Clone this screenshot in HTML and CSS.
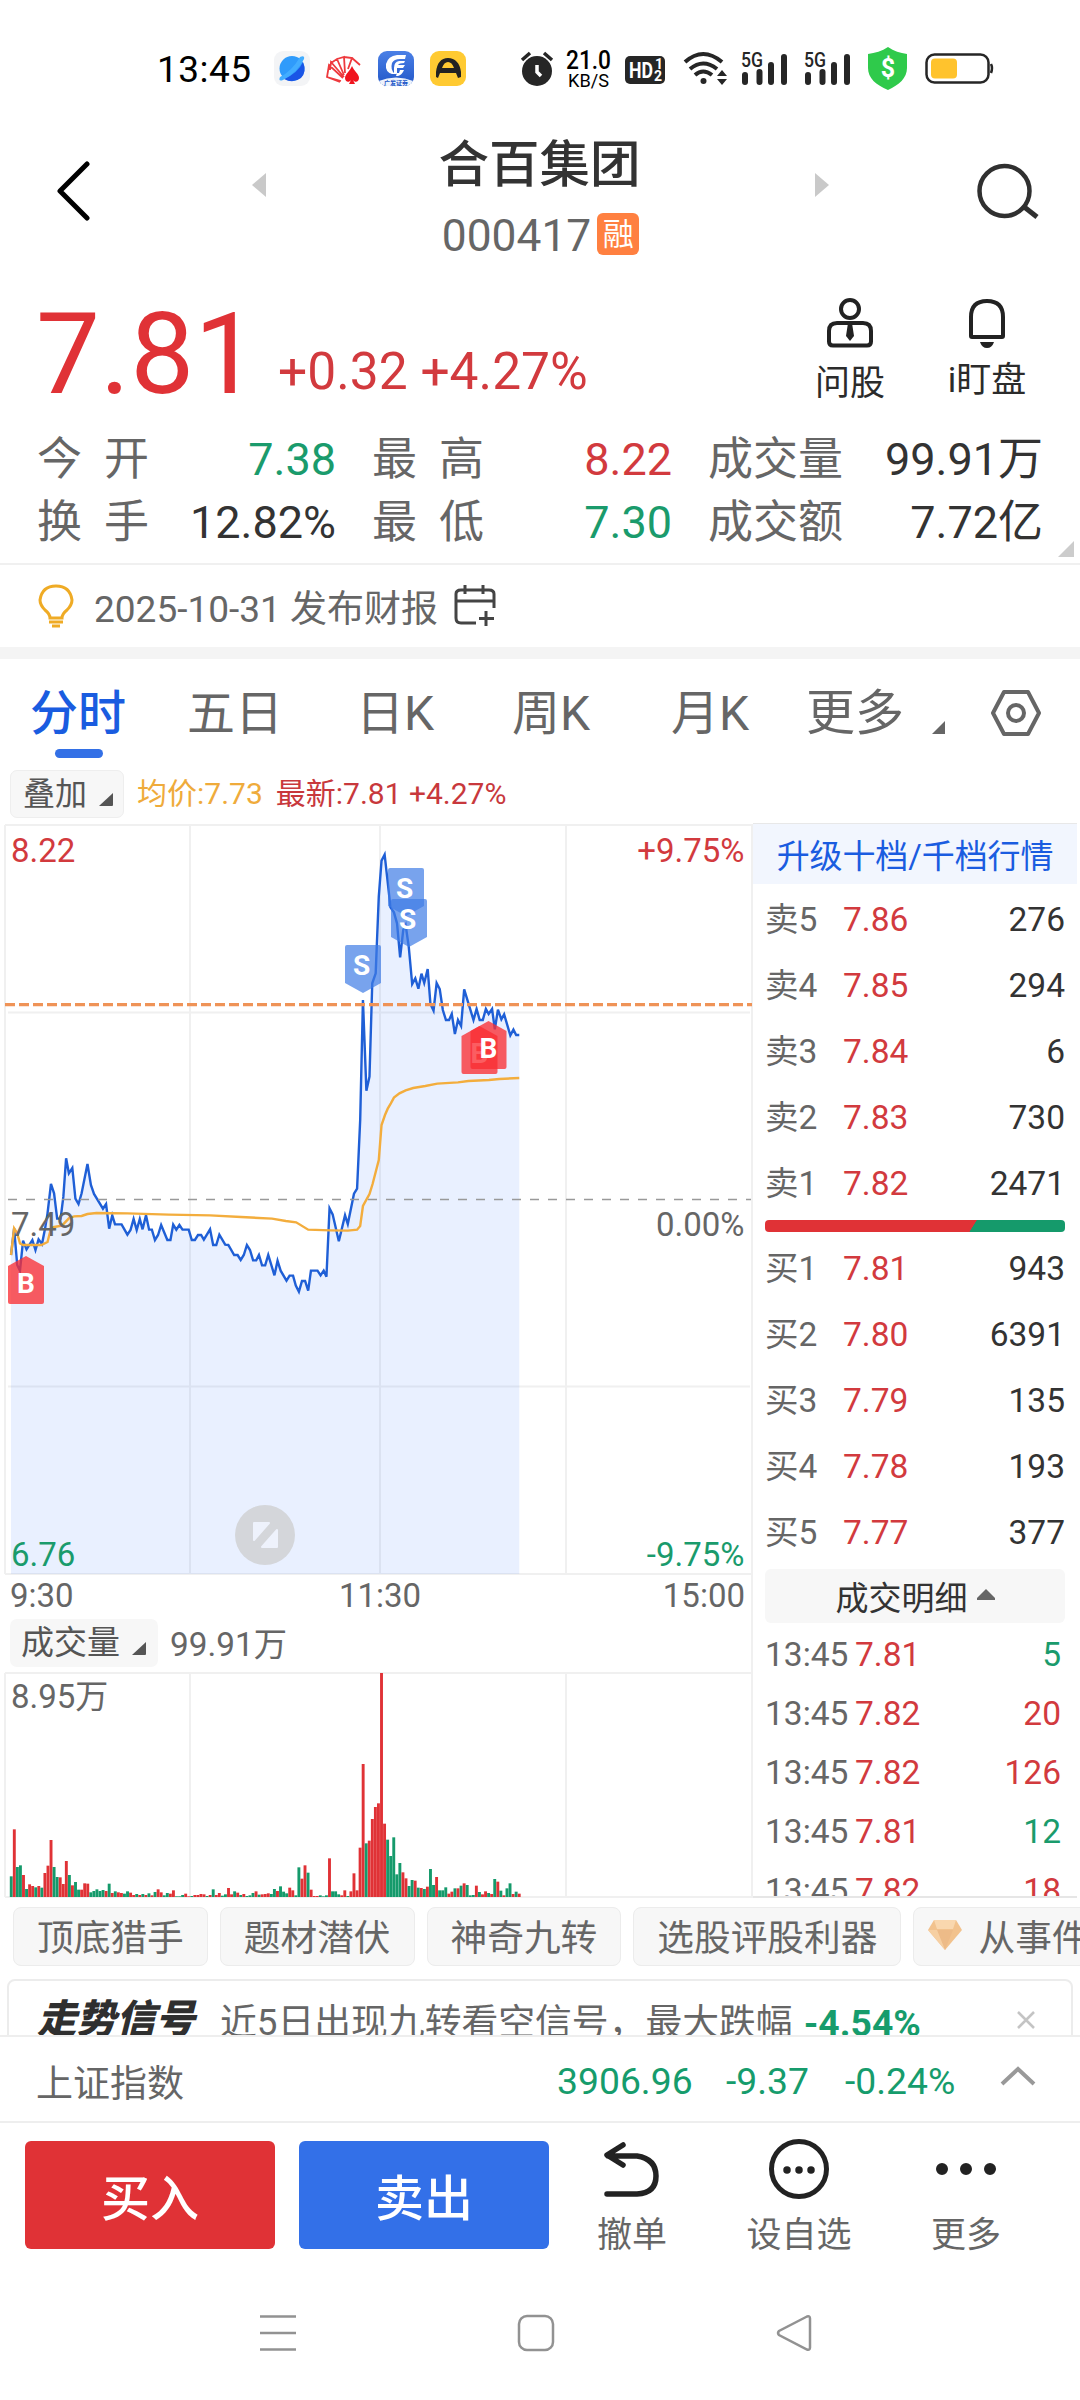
FILE: index.html
```html
<!DOCTYPE html>
<html lang="zh-CN">
<head>
<meta charset="utf-8">
<title>合百集团 000417</title>
<link rel="stylesheet" href="styles.css">
</head>
<body>
<header class="status">
  <span class="clock">13:45</span>
  <svg class="status-icons" width="730" height="66" viewBox="270 36 730 66">
    <defs>
      <linearGradient id="planet" x1="0" y1="0" x2="1" y2="1"><stop offset="0" stop-color="#35b5ff"/><stop offset=".55" stop-color="#3d9dff"/><stop offset="1" stop-color="#1247e0"/></linearGradient>
      <linearGradient id="gf" x1="0" y1="0" x2="0" y2="1"><stop offset="0" stop-color="#4b80e6"/><stop offset="1" stop-color="#2257c8"/></linearGradient>
      <clipPath id="gfClip"><rect x="378" y="51" width="36" height="35" rx="9"/></clipPath>
    </defs>
    <rect x="274" y="51" width="36" height="35" rx="9" fill="#f3f4f6"/>
    <circle cx="292" cy="68.500" r="12.500" fill="#2f9bfb"/>
    <path d="M303 62q4 10-2 16-8 6-17 1 14-6 19-17z" fill="#1a55e6"/>
    <path d="M300 57q5-2 4 2-6 13-21 21-5 2-3-3 12-6 20-20z" fill="#42adff"/>
    <g fill="none" stroke="#ee3a3e" stroke-width="1.800"><path d="M340 82l-13-5 2-12 14 13M330 70l1-8 13 15M331 63l6-4 7 16M337 59l7-2 1 16M344 57l8 1-4 11M352 58l8 7M327 77l14 4"/></g>
    <path d="M352 66c2 5 7 8 7 12 0 4-4 5-6 2l2 4h-6l2-4c-2 3-6 2-6-2 0-4 5-7 7-12z" fill="#f0141e"/>
    <g clip-path="url(#gfClip)"><rect x="378" y="51" width="36" height="35" fill="url(#gf)"/><path d="M376 82q20-9 40 0v6h-40z" fill="#eef3fc"/></g>
    <path d="M406 55h-9q-9 1-11 9-1 8 6 10h3q-5-4-3-11 2-4 8-4h5zM405 61h-6q-5 1-5 7v6h3v-6h6l2-3h-7q1-2 6-2zM400 70h4q-2 5-6 6h-2l1-3h2z" fill="#fff"/>
    <text x="396" y="84.500" font-size="6" font-weight="700" text-anchor="middle" fill="#2257c8">广发证券</text>
    <rect x="430" y="51" width="36" height="35" rx="9" fill="#ffca32"/>
    <path d="M438 78l-2-1v-5c1-9 5-14 12-14s12 5 13 14v5l-3 1-2-5h-16zM442 68h12q-2-6-6-6t-6 6z" fill="#222" fill-rule="evenodd"/>
    <circle cx="537" cy="71" r="15" fill="#262626"/><path d="M522 60l8-7M544 53l8 7" stroke="#262626" stroke-width="3.500"/><path d="M537 65v7l4 4" stroke="#fff" stroke-width="3.500" fill="none"/>
    <text x="588.500" y="69" font-size="25" font-weight="500" text-anchor="middle" textLength="45" lengthAdjust="spacingAndGlyphs">21.0</text>
    <text x="588.500" y="86.500" font-size="19" font-weight="400" text-anchor="middle" textLength="41" lengthAdjust="spacingAndGlyphs">KB/S</text>
    <rect x="625" y="56" width="40" height="28" rx="5" fill="#262626"/>
    <text x="629" y="78" font-size="22" font-weight="700" fill="#fff" textLength="24" lengthAdjust="spacingAndGlyphs">HD</text>
    <text x="655" y="69" font-size="14" font-weight="700" fill="#fff">1</text><text x="654" y="81" font-size="14" font-weight="700" fill="#fff">2</text>
    <g fill="none" stroke="#262626" stroke-width="4"><path d="M685 62q18-16 37 0M690 69q13-11 27 0M695 75q8-7 17 0"/></g><circle cx="703.500" cy="81" r="3" fill="#262626"/><path d="M717 76l5-6 5 6zM717 79h10l-5 6z" fill="#262626"/>
    <g id="signal5g"><text x="741" y="67" font-size="20" font-weight="500" textLength="22" lengthAdjust="spacingAndGlyphs" fill="#262626">5G</text><path d="M745 75v7M759.500 72v10M771 65v17M784 57v25" stroke="#262626" stroke-width="6" stroke-linecap="round"/></g>
    <use href="#signal5g" x="63"/>
    <path d="M888 47c6 4 12 6 19 7v14c0 10-8 17-19 22-12-5-20-12-20-22V54c7-1 14-3 20-7z" fill="#2fca4b"/>
    <text x="888" y="77" font-size="25" font-weight="700" fill="#fff" text-anchor="middle">$</text>
    <rect x="926.500" y="54.500" width="62" height="28" rx="8" fill="#fff" stroke="#262626" stroke-width="2.500"/><rect x="931" y="58.500" width="26" height="20" rx="4" fill="#ffc32d"/><path d="M991 64q2 4 0 9" stroke="#262626" stroke-width="2.500"/>
  </svg>
</header>

<section class="title-bar">
  <svg class="back" width="34" height="60" viewBox="0 0 34 60"><path d="M31 3L4 30l27 27" fill="none" stroke="#000" stroke-width="5" stroke-linecap="round" stroke-linejoin="round"/></svg>
  <svg class="prev" width="14" height="24" viewBox="0 0 14 24"><path d="M14 0v24L0 12z" fill="#c9c9c9"/></svg>
  <div class="title"><h1>合百集团</h1><p class="code">000417<b class="badge">融</b></p></div>
  <svg class="next" width="14" height="24" viewBox="0 0 14 24"><path d="M0 0v24l14-12z" fill="#c9c9c9"/></svg>
  <svg class="search" width="62" height="58" viewBox="0 0 62 58"><circle cx="27.500" cy="29" r="25" fill="none" stroke="#303030" stroke-width="4.500"/><path d="M46 44l14 11" stroke="#303030" stroke-width="5"/></svg>
</section>

<section class="quote">
  <span class="price">7.81</span>
  <span class="change">+0.32 +4.27%</span>
  <div class="tool ask"><svg width="50" height="52" viewBox="0 0 50 52" fill="none" stroke="#222" stroke-width="4"><circle cx="25" cy="12" r="9"/><path d="M8 48.500q-4 0-4-4V34q0-8 8-8h26q8 0 8 8v10.500q0 4-4 4z"/><path d="M23 26h4l2 13-4 5-4-5z" fill="#222" stroke="none"/></svg><span>问股</span></div>
  <div class="tool watch"><svg width="40" height="52" viewBox="0 0 40 52" fill="none" stroke="#222" stroke-width="4"><path d="M4 39V20Q4 4 20 4t16 16v19q0 1-1 1H5q-1 0-1-1z"/><path d="M13 45h14q-2 6-7 6t-7-6z" fill="#222" stroke="none"/></svg><span>i盯盘</span></div>
</section>

<section class="stats">
  <span class="k wide">今开</span><span class="v green">7.38</span><span class="k wide inner">最高</span><span class="v red">8.22</span><span class="k inner">成交量</span><span class="v">99.91万</span>
  <span class="k wide">换手</span><span class="v">12.82%</span><span class="k wide inner">最低</span><span class="v green">7.30</span><span class="k inner">成交额</span><span class="v">7.72亿</span>
  <i class="corner"></i>
</section>

<section class="tip">
  <svg width="36" height="44" viewBox="0 0 36 44" fill="none" stroke="#efab25" stroke-width="3"><path d="M12 34q0-4-5-8-5-5-5-10Q4 2 18 2t16 14q0 5-5 10-5 4-5 8zM11 38h14M14 42h8"/></svg>
  <span>2025-10-31 发布财报</span>
  <svg width="42" height="42" viewBox="0 0 42 42" fill="none" stroke="#444" stroke-width="3"><path d="M22 38H7q-5 0-5-5V9q0-4 5-4h28q5 0 5 4v14M2 16h38M11 0v9M29 0v9M32 26v15M25 33.500h15"/></svg>
</section>

<nav class="tabs">
  <span class="tab active">分时</span><span class="tab">五日</span><span class="tab">日K</span><span class="tab">周K</span><span class="tab">月K</span><span class="tab more">更多</span>
  <svg class="tri" width="13" height="13" viewBox="0 0 14 14"><path d="M14 0v14H0z" fill="#666"/></svg>
  <svg class="gear" width="52" height="48" viewBox="0 0 52 48" fill="none" stroke="#666" stroke-width="4"><path d="M14 3h24l11 21-11 21H14L3 24z" stroke-linejoin="round"/><circle cx="26" cy="24" r="8"/></svg>
</nav>

<main class="market">
  <section class="charts">
    <div class="legend"><span class="chip">叠加<svg width="14" height="13" viewBox="0 0 14 13"><path d="M14 0v12q0 1-1 1H0z" fill="#555"/></svg></span><span class="avg">均价:7.73</span><span class="last">最新:7.81 +4.27%</span></div>
    <svg class="chart" width="753" height="793" viewBox="0 823 753 793">
      <g fill="none" stroke="#f0f0f0" stroke-width="2"><path d="M5 825h748M5 1574h748M5 825v749M190 825v749M380 825v749M566 825v749M752 825v791M8 1012.500h742M8 1386.500h742"/></g>
      <g transform="translate(0 820) scale(.34435 .33333)">
        <path class="area" d="M32 1305L41 1225 50 1335 58 1352 67 1262 77 1288 94 1260 103 1290 112 1258 122 1272 131 1225 138 1180 148 1092 157 1120 166 1196 176 1196 184 1130 192 1015 200 1060 210 1044 219 1136 228 1152 237 1120 254 1032 264 1095 273 1122 299 1166 308 1152 317 1226 326 1186 334 1213 353 1213 370 1244 379 1230 388 1197 397 1230 406 1197 414 1228 424 1186 433 1229 441 1229 450 1260 459 1245 468 1215 486 1260 495 1260 503 1214 512 1229 521 1215 530 1229 548 1229 557 1260 566 1260 575 1245 584 1245 592 1259 610 1228 619 1275 628 1275 637 1244 654 1274 663 1275 680 1305 690 1305 699 1320 708 1305 717 1275 726 1290 735 1321 744 1321 752 1305 761 1336 770 1336 779 1305 797 1366 806 1322 815 1352 832 1382 841 1367 851 1367 859 1397 868 1415 877 1383 886 1383 895 1412 903 1352 922 1352 931 1366 940 1352 948 1370 957 1165 966 1183 984 1264 1002 1186 1010 1212 1028 1121 1037 1106 1046 900 1054 540 1064 812 1073 770 1081 490 1091 460 1100 230 1108 122 1117 104 1134 262 1144 277 1153 310 1162 412 1171 330 1178 315 1187 380 1197 492 1206 475 1215 506 1224 461 1232 489 1242 447 1250 552 1259 572 1268 489 1277 507 1286 570 1295 600 1304 600 1312 582 1321 642 1330 600 1339 618 1348 508 1375 600 1384 567 1393 600 1402 600 1411 567 1419 582 1429 567 1437 628 1446 569 1456 598 1464 583 1482 646 1491 629 1499 645H1508V2262H32z"/>
        <path class="line" d="M32 1305L41 1225 50 1335 58 1352 67 1262 77 1288 94 1260 103 1290 112 1258 122 1272 131 1225 138 1180 148 1092 157 1120 166 1196 176 1196 184 1130 192 1015 200 1060 210 1044 219 1136 228 1152 237 1120 254 1032 264 1095 273 1122 299 1166 308 1152 317 1226 326 1186 334 1213 353 1213 370 1244 379 1230 388 1197 397 1230 406 1197 414 1228 424 1186 433 1229 441 1229 450 1260 459 1245 468 1215 486 1260 495 1260 503 1214 512 1229 521 1215 530 1229 548 1229 557 1260 566 1260 575 1245 584 1245 592 1259 610 1228 619 1275 628 1275 637 1244 654 1274 663 1275 680 1305 690 1305 699 1320 708 1305 717 1275 726 1290 735 1321 744 1321 752 1305 761 1336 770 1336 779 1305 797 1366 806 1322 815 1352 832 1382 841 1367 851 1367 859 1397 868 1415 877 1383 886 1383 895 1412 903 1352 922 1352 931 1366 940 1352 948 1370 957 1165 966 1183 984 1264 1002 1186 1010 1212 1028 1121 1037 1106 1046 900 1054 540 1064 812 1073 770 1081 490 1091 460 1100 230 1108 122 1117 104 1134 262 1144 277 1153 310 1162 412 1171 330 1178 315 1187 380 1197 492 1206 475 1215 506 1224 461 1232 489 1242 447 1250 552 1259 572 1268 489 1277 507 1286 570 1295 600 1304 600 1312 582 1321 642 1330 600 1339 618 1348 508 1375 600 1384 567 1393 600 1402 600 1411 567 1419 582 1429 567 1437 628 1446 569 1456 598 1464 583 1482 646 1491 629 1499 645H1508"/>
        <path class="line average" d="M32 1305L41 1225 50 1240 58 1270 67 1275 120 1275 138 1266 148 1225 157 1221 180 1217 200 1195 215 1189 237 1188 254 1182 280 1179 370 1180 490 1184 610 1186 700 1191 790 1196 830 1203 860 1207 895 1229 960 1231 1010 1232 1037 1229 1046 1218 1054 1158 1073 1122 1082 1092 1100 1020 1108 915 1118 885 1126 866 1135 850 1144 833 1160 820 1178 811 1200 804 1235 798 1270 791 1330 787 1360 783 1420 780 1450 777 1508 774"/>
      </g>
      <path d="M8 1199.500h743" stroke="#999" stroke-width="1.300" stroke-dasharray="9 9"/>
      <path d="M5 1004.700h747" stroke="#ef9357" stroke-width="3.200" stroke-dasharray="10 4"/>
      <g class="pins">
        <g id="sell"><path d="M347 945h32q2 0 2 2v36l-18 10-18-10v-36q0-2 2-2z" fill="#3f7ce6" fill-opacity=".7"/><text x="361.500" y="975">S</text></g>
        <use href="#sell" x="43" y="-77"/><use href="#sell" x="46" y="-46"/>
        <g id="buy"><path d="M10 1304h32q2 0 2-2v-36l-18-10-18 10v36q0 2 2 2z" fill="#fa2c32" fill-opacity=".77"/><text x="26" y="1293">B</text></g>
        <use href="#buy" x="453.500" y="-230"/><use href="#buy" x="462.500" y="-235"/>
      </g>
      <circle cx="265" cy="1535" r="30" fill="#d4d6da"/><path d="M254 1523h15l-15 17zM277 1547h-15l15-17z" fill="#eef2fc" stroke="#eef2fc" stroke-width="2" stroke-linejoin="round"/>
      <g class="axis"><text class="red" x="11" y="862">8.22</text><text class="red" x="744.500" y="862" text-anchor="end">+9.75%</text><text x="11" y="1235.500">7.49</text><text x="744.500" y="1235.500" text-anchor="end">0.00%</text><text class="green" x="11" y="1565.500">6.76</text><text class="green" x="744.500" y="1565.500" text-anchor="end">-9.75%</text><text x="10" y="1606.500">9:30</text><text x="380" y="1606.500" text-anchor="middle">11:30</text><text x="745" y="1606.500" text-anchor="end">15:00</text></g>
    </svg>
    <div class="legend volume-legend"><span class="chip">成交量<svg width="14" height="13" viewBox="0 0 14 13"><path d="M14 0v12q0 1-1 1H0z" fill="#555"/></svg></span><span class="total">99.91万</span></div>
    <svg class="chart" width="753" height="226" viewBox="0 1672 753 226">
      <path d="M5 1673h748M5 1897h748M5 1673v224M190 1673v224M566 1673v224M752 1672v226" stroke="#f0f0f0" stroke-width="2"/>
      <g id="volume"></g>
      <text class="axis" x="11" y="1707.500">8.95万</text>
    </svg>
  </section>

  <aside class="book">
    <div class="upgrade">升级十档/千档行情</div>
    <div class="levels">
      <div><span>卖5</span><b>7.86</b><em>276</em></div><div><span>卖4</span><b>7.85</b><em>294</em></div><div><span>卖3</span><b>7.84</b><em>6</em></div><div><span>卖2</span><b>7.83</b><em>730</em></div><div><span>卖1</span><b>7.82</b><em>2471</em></div>
    </div>
    <div class="ratio"></div>
    <div class="levels">
      <div><span>买1</span><b>7.81</b><em>943</em></div><div><span>买2</span><b>7.80</b><em>6391</em></div><div><span>买3</span><b>7.79</b><em>135</em></div><div><span>买4</span><b>7.78</b><em>193</em></div><div><span>买5</span><b>7.77</b><em>377</em></div>
    </div>
    <div class="detail">成交明细<svg width="18" height="11" viewBox="0 0 18 11"><path d="M9 0l9 9v2H0V9z" fill="#666"/></svg></div>
    <div class="ticks">
      <div><span>13:45</span><b>7.81</b><em class="green">5</em></div><div><span>13:45</span><b>7.82</b><em class="red">20</em></div><div><span>13:45</span><b>7.82</b><em class="red">126</em></div><div><span>13:45</span><b>7.81</b><em class="green">12</em></div><div><span>13:45</span><b>7.82</b><em class="red">18</em></div>
    </div>
  </aside>
</main>

<section class="tags">
  <span>顶底猎手</span><span>题材潜伏</span><span>神奇九转</span><span>选股评股利器</span>
  <span class="gem"><svg width="34" height="30" viewBox="0 0 34 30"><path d="M6 0h22l6 10-17 20L0 10z" fill="#f2c28d"/><path d="M6 0h22l-3 9H9z" fill="#f9d7ae"/><path d="M9 10h16l-8 20z" fill="#edbb88"/><path d="M0 10h9l8 20z" fill="#f6cfa2"/></svg>从事件</span>
</section>

<section class="signal"><div class="signal-card">
  <b class="logo">走势信号</b><span>近5日出现九转看空信号，最大跌幅</span><strong>-4.54%</strong>
  <svg width="18" height="18" viewBox="0 0 18 18"><path d="M1 1l16 16M17 1L1 17" stroke="#c4c4c4" stroke-width="2.500"/></svg>
</div></section>

<section class="index"><span class="name">上证指数</span><span class="n1">3906.96</span><span class="n2">-9.37</span><span class="n3">-0.24%</span>
  <svg width="36" height="20" viewBox="0 0 36 20"><path d="M2 18L18 3l16 15" fill="none" stroke="#999" stroke-width="4"/></svg></section>

<footer class="actions">
  <button class="buy">买入</button><button class="sell">卖出</button>
  <div class="act undo"><svg width="60" height="60" viewBox="0 0 60 60" fill="none" stroke="#222" stroke-width="5.500" stroke-linecap="round" stroke-linejoin="round"><path d="M21 6L5 16l16 10M6 17h29Q54 20 54 37T35 55H5"/></svg><span>撤单</span></div>
  <div class="act fav"><svg width="60" height="60" viewBox="0 0 60 60"><circle cx="30" cy="30" r="27.500" fill="none" stroke="#222" stroke-width="5"/><path d="M18 31h.01M30 31h.01M42 31h.01" stroke="#222" stroke-width="7.500" stroke-linecap="round"/></svg><span>设自选</span></div>
  <div class="act rest"><svg width="60" height="60" viewBox="0 0 60 60"><path d="M6 30h.01M30 30h.01M54 30h.01" stroke="#222" stroke-width="12" stroke-linecap="round"/></svg><span>更多</span></div>
</footer>

<nav class="system">
  <svg width="38" height="38" viewBox="0 0 38 38"><path d="M1 2.500h36M1 19h36M1 35.500h36" stroke="#929292" stroke-width="2.500"/></svg>
  <svg width="38" height="38" viewBox="0 0 38 38"><rect x="2" y="2" width="34" height="34" rx="8" fill="none" stroke="#929292" stroke-width="2.500"/></svg>
  <svg width="38" height="38" viewBox="0 0 38 38"><path d="M32 2.500L4 17q-2 2 0 4l28 14.500q3 1 3-2v-29q0-3-3-2z" fill="none" stroke="#929292" stroke-width="2.500"/></svg>
</nav>
<script src="volume.js"></script>
</body>
</html>
```
FILE: styles.css
```css
* { box-sizing: border-box; margin: 0; padding: 0; }
body { width: 1080px; height: 2400px; overflow: hidden; background: #fff; color: #333; font-family: Roboto, "Noto Sans CJK SC", sans-serif; }
svg { display: block; flex: none; }
svg text { font-family: Roboto, "Noto Sans CJK SC", sans-serif; }
b, em, h1, i { font-weight: 400; font-style: normal; }
.red { color: #d23a3e; fill: #d23a3e; }
.green { color: #1a9b6c; fill: #1a9b6c; }

.status { height: 120px; display: flex; align-items: flex-start; padding: 36px 0 0 157px; }
.clock { width: 113px; font-size: 37px; font-weight: 400; line-height: 67px; color: #000; letter-spacing: .5px; }

.title-bar { height: 155px; display: flex; padding-left: 56px; }
.title-bar .back { margin-top: 41px; }
.title-bar .prev { margin: 53px 0 0 162px; }
.title-bar .next { margin-top: 53px; }
.title-bar .search { margin: 42px 0 0 148px; }
.title { width: 549px; display: flex; flex-direction: column; align-items: center; }
.title h1 { font-size: 50.5px; font-weight: 500; line-height: 70px; margin: 10px 2px 0 0; }
.code { display: flex; align-items: center; height: 56px; margin-top: 8px; font-size: 44.3px; color: #666; }
.badge { width: 42px; height: 42px; margin: -5px 0 0 6px; border-radius: 6px; background: #ff8040; color: #fff; font-size: 31px; line-height: 43px; text-align: center; }

.quote { height: 145px; display: flex; align-items: flex-start; padding-left: 36px; color: #e03236; }
.price { width: 242px; font-size: 114px; line-height: 130px; margin-top: 14px; }
.change { width: 530px; font-size: 51.5px; line-height: 60px; margin-top: 67px; color: #d23a3e; white-space: nowrap; }
.tool { width: 84px; height: 120px; margin-top: 22px; display: flex; flex-direction: column; align-items: center; color: #2b2b2b; font-size: 35px; line-height: 50px; white-space: nowrap; }
.tool span { margin-top: 10px; }
.watch { margin-left: 53px; }
.watch span { margin-top: 7px; }

.stats { position: relative; height: 145px; display: grid; grid-template-columns: 113px 186px 150px 186px 170px 201px; grid-template-rows: 63px 63px; padding: 8px 37px 0; border-bottom: 2px solid #f0f0f0; font-size: 45px; line-height: 63px; }
.stats .k { color: #666; white-space: nowrap; }
.stats .wide { letter-spacing: 22px; }
.stats .inner { padding-left: 36px; }
.stats .v { text-align: right; white-space: nowrap; }
.corner { position: absolute; right: 6px; bottom: 6px; width: 16px; height: 16px; background: #ccc; clip-path: polygon(100% 0, 100% 100%, 0 100%); }

.tip { height: 94px; display: flex; align-items: center; padding-left: 38px; border-bottom: 12px solid #f4f4f4; color: #666; font-size: 37px; }
.tip span { width: 360px; margin-left: 20px; white-space: nowrap; }

.tabs { height: 106px; display: flex; align-items: flex-start; padding: 19px 0 0 30px; color: #666; font-size: 48px; line-height: 72px; }
.tab { width: 157px; height: 74px; white-space: nowrap; }
.tab:nth-child(2) { width: 169px; }
.tab:nth-child(3) { width: 156px; }
.tab:nth-child(4) { width: 159px; }
.tab:nth-child(5) { width: 135px; }
.tab.more { width: 126px; font-size: 49px; }
.tab.active { color: #1a5ce0; font-weight: 500; }
.tab.active::after { content: ""; display: block; width: 48px; height: 9px; margin: -1px 0 0 25px; border-radius: 5px; background: #3370e6; }
.tri { margin-top: 43px; }
.gear { margin: 11px 0 0 45px; }

.market { height: 1133px; display: flex; }
.charts { width: 753px; height: 1133px; }
.legend { height: 58px; display: flex; align-items: flex-start; padding: 5px 0 0 10px; font-size: 30px; line-height: 48px; white-space: nowrap; }
.chip { display: flex; align-items: center; width: 114px; height: 48px; padding-left: 12px; border: 1px solid #eee; border-radius: 7px; background: #f7f7f7; color: #555; font-size: 32px; }
.chip svg { margin: 10px 0 0 12px; }
.avg { margin-left: 13px; color: #efab3b; }
.last { margin-left: 13px; color: #c8383c; }
.volume-legend { height: 56px; padding-top: 3px; border-right: 2px solid #f0f0f0; line-height: 52px; }
.volume-legend .chip { width: 148px; padding-left: 11px; border: 0; font-size: 33px; }
.total { margin-left: 12px; font-size: 33.3px; color: #666; }
.area { fill: #4d82ff; fill-opacity: .12; }
.line { fill: none; stroke: #1f5fd6; stroke-width: 2.4px; vector-effect: non-scaling-stroke; }
.average { stroke: #f3ad3d; }
.pins text { fill: #fff; font-size: 28px; font-weight: 700; text-anchor: middle; }
.axis { fill: #666; font-size: 33px; }
.axis .red { fill: #d23a3e; }
.axis .green { fill: #1a9b6c; }

.book { width: 324px; height: 1133px; padding-top: 58px; font-size: 33.5px; overflow: hidden; border-bottom: 2px solid #e6e6e6; }
.upgrade { height: 61px; border-top: 1px solid #e8e8e8; background: #f2f6fe; color: #1a5ce0; font-size: 33px; line-height: 66px; text-align: center; letter-spacing: -.1px; }
.levels { padding-bottom: 5px; }
.levels div { display: flex; height: 66px; padding: 0 12px 0 12px; line-height: 71px; }
.levels span { width: 78px; color: #666; }
.levels b, .ticks b { color: #d23a3e; }
.levels em, .ticks em { margin-left: auto; }
.ratio { height: 12px; margin: 1px 12px 0; border-radius: 4px; background: linear-gradient(122deg, #e03236 68.8%, #159a6b 69%); }
.ratio + .levels { padding: 1px 0 6px; }
.detail { display: flex; align-items: center; justify-content: center; height: 54px; margin: 0 12px; border-radius: 6px; background: #f7f7f7; font-size: 33px; }
.detail svg { margin-left: 9px; margin-top: -3px; }
.ticks div { display: flex; height: 59px; line-height: 64px; padding: 0 16px 0 12px; font-size: 33.5px; }
.ticks span { width: 90px; color: #666; }

.tags { height: 81px; display: flex; align-items: flex-start; gap: 12px; padding: 9px 0 0 13px; overflow: hidden; }
.tags span { flex: none; height: 59px; padding: 0 23px; border: 1px solid #ececec; border-radius: 8px; background: #f7f7f7; color: #666; font-size: 36.7px; line-height: 61px; white-space: nowrap; }
.tags .gem { display: flex; padding-left: 14px; }
.gem svg { margin: 12px 16px 0 0; }

.signal { height: 56px; padding: 0 7px; overflow: hidden; }
.signal-card { height: 100px; display: flex; align-items: flex-start; padding: 12px 36px 0 28px; border: 2px solid #ececec; border-radius: 8px; font-size: 36.8px; line-height: 60px; color: #666; white-space: nowrap; }
.logo { width: 183px; color: #2f2f2f; font-size: 39.5px; font-weight: 900; font-style: italic; line-height: 54px; }
.signal strong { margin-left: 11px; font-size: 37.3px; font-weight: 700; color: #169c6c; }
.signal svg { margin: 18px 0 0 auto; }

.index { height: 88px; display: flex; align-items: center; padding: 4px 44px 0 36px; border-top: 2px solid #eee; border-bottom: 2px solid #eee; color: #169c6c; font-size: 37.3px; white-space: nowrap; }
.index .name { width: 521px; color: #666; font-size: 37px; }
.n1 { width: 169px; }
.n2 { width: 119px; }
.index svg { margin-left: auto; margin-top: -10px; }

.actions { height: 146px; display: flex; align-items: flex-start; padding: 18px 0 0 25px; }
.actions button { width: 250px; height: 108px; border: 0; border-radius: 6px; color: #fff; font: 500 49px/108px Roboto, "Noto Sans CJK SC", sans-serif; padding-top: 5px; }
.actions .buy { background: #e03236; margin-right: 24px; }
.actions .sell { background: #3370e8; }
.act { width: 120px; display: flex; flex-direction: column; align-items: center; margin-top: -2px; font-size: 35px; line-height: 50px; color: #666; }
.act span { margin-top: 12px; white-space: nowrap; }
.undo { margin-left: 23px; }
.fav { margin-left: 47px; }
.rest { margin-left: 47px; }

.system { height: 130px; display: flex; padding: 45px 0 0 259px; gap: 220px; }
```
FILE: volume.js
```js
// One entry per trading minute: direction (R up, G down) and bar height in thirds of a pixel.
const bars = "G62 R203 G90 G95 R66 G24 R38 R33 G29 R33 G28 R72 R94 R171 G90 G60 R59 R39 R108 G66 R35 G45 G22 R22 R41 R40 G14 G18 G23 G18 G21 R18 G40 R12 G17 R14 R12 G10 G17 R13 R6 G9 R6 G9 R6 G11 R5 G15 R23 R14 G5 G12 R10 R20 G2 G2 G6 R10 R2 G3 R6 R6 R9 R8 G3 R6 G23 R6 R12 G4 G8 R27 R8 G17 R13 G6 R9 G3 G5 G12 R17 G7 R8 R9 R11 G9 G24 R18 G32 G16 G11 R28 R20 G5 G89 R55 R95 G73 R22 R3 R3 G5 G2 G5 R116 G17 G17 G8 R5 R20 G3 R17 R71 R20 R148 R399 G161 R169 R234 R270 R281 R672 R220 G172 G123 G179 G68 G102 R74 R56 G33 G51 R49 G28 R27 G24 R31 G84 G36 R60 G20 G20 G29 R10 R16 G26 R26 G34 R41 G36 G5 G6 R34 G15 R8 R17 G12 R9 G54 R46 G19 R5 G26 G41 R9 G16 R10".split(" ");
const layer = document.getElementById("volume");
bars.forEach((bar, i) => {
  const height = Number(bar.slice(1)) / 3;
  const rect = document.createElementNS("http://www.w3.org/2000/svg", "rect");
  rect.setAttribute("x", 9.8 + i * 3.06);
  rect.setAttribute("y", 1897 - height);
  rect.setAttribute("width", 2.9);
  rect.setAttribute("height", height);
  rect.setAttribute("fill", bar[0] === "R" ? "#e03236" : "#159a6b");
  layer.appendChild(rect);
});
```
